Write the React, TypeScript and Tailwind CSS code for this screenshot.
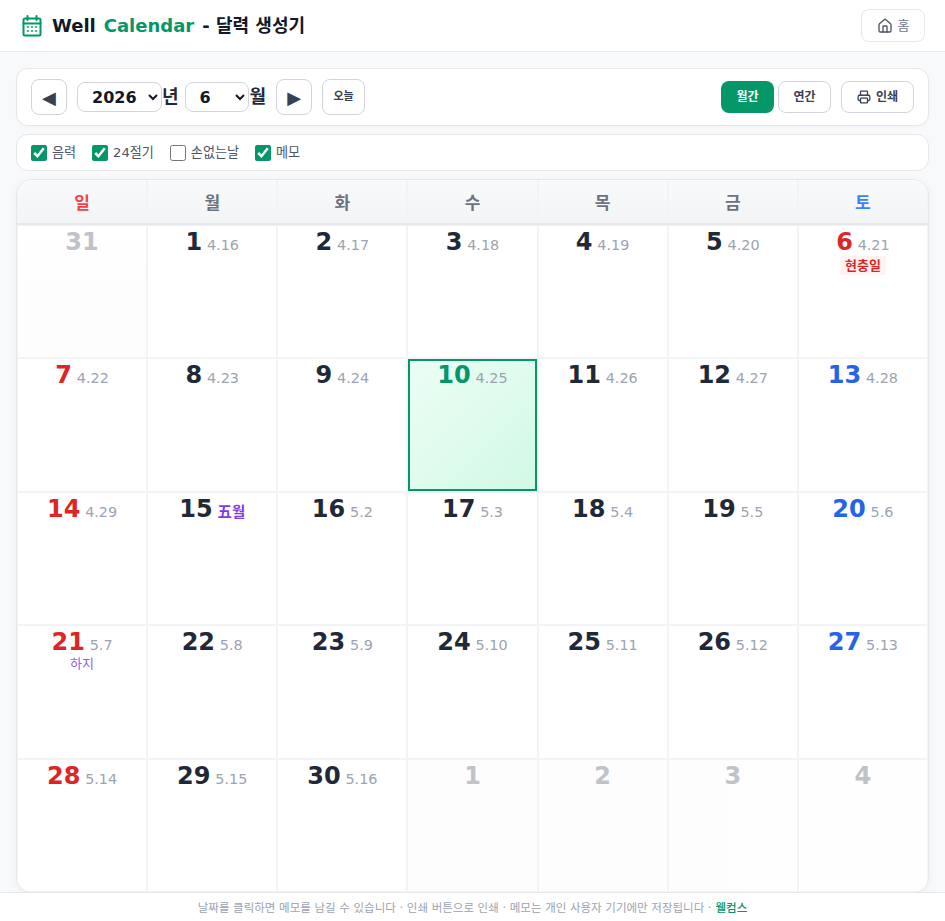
import React from "react";

type Cell = { d: number; l?: string; other?: string; c?: "red" | "blue"; today?: boolean; term?: string; holi?: string; month?: string };

const weeks: Cell[][] = [
  [{ d: 31, other: "bg-gradient-to-b from-white to-[#fdfdfd] to-[55%]" }, { d: 1, l: "4.16" }, { d: 2, l: "4.17" }, { d: 3, l: "4.18" }, { d: 4, l: "4.19" }, { d: 5, l: "4.20" }, { d: 6, l: "4.21", c: "red", holi: "현충일" }],
  [{ d: 7, l: "4.22", c: "red" }, { d: 8, l: "4.23" }, { d: 9, l: "4.24" }, { d: 10, l: "4.25", today: true }, { d: 11, l: "4.26" }, { d: 12, l: "4.27" }, { d: 13, l: "4.28", c: "blue" }],
  [{ d: 14, l: "4.29", c: "red" }, { d: 15, month: "五월" }, { d: 16, l: "5.2" }, { d: 17, l: "5.3" }, { d: 18, l: "5.4" }, { d: 19, l: "5.5" }, { d: 20, l: "5.6", c: "blue" }],
  [{ d: 21, l: "5.7", c: "red", term: "하지" }, { d: 22, l: "5.8" }, { d: 23, l: "5.9" }, { d: 24, l: "5.10" }, { d: 25, l: "5.11" }, { d: 26, l: "5.12" }, { d: 27, l: "5.13", c: "blue" }],
  [{ d: 28, l: "5.14", c: "red" }, { d: 29, l: "5.15" }, { d: 30, l: "5.16" }, { d: 1, other: "bg-[#fdfdfd]" }, { d: 2, other: "bg-[#fdfdfd]" }, { d: 3, other: "bg-gradient-to-r from-[#fdfdfd] to-[#fefefe]" }, { d: 4, other: "bg-[#fefefe]" }],
];

const days = ["일", "월", "화", "수", "목", "금", "토"];

function Check({ on, label }: { on: boolean; label: string }) {
  return (
    <label className="flex items-center gap-[5px] text-[13.1px] leading-[16px] text-[#4b5563]">
      <input type="checkbox" defaultChecked={on} className="m-0 h-4 w-4 accent-[#059669]" />
      <span className="pt-px">{label}</span>
    </label>
  );
}

function DayCell({ cell }: { cell: Cell }) {
  const numColor = cell.other
    ? "text-[#bfc3c9]"
    : cell.today
      ? "text-[#059669]"
      : cell.c === "red"
        ? "text-[#dc2626]"
        : cell.c === "blue"
          ? "text-[#2563eb]"
          : "text-[#1f2937]";
  const look = cell.today
    ? "border-2 border-[#059669] bg-gradient-to-br from-[#ecfdf5] to-[#d1fae5]"
    : `pt-px ${cell.other ?? "bg-white"}`;
  return (
    <div className="min-w-0 border border-[#f3f4f6]">
      <div className={`flex h-full flex-col items-center ${look}`}>
        <div className={`flex items-baseline justify-center gap-[4.8px] ${cell.today ? "-mt-px" : ""}`}>
          <span className={`text-[24px] leading-[30px] font-bold ${numColor}`}>{cell.d}</span>
          {cell.l && <span className="text-[14.4px] leading-[18px] text-[#9ca3af]">{cell.l}</span>}
          {cell.month && <span className="text-[14.4px] leading-[18px] font-bold text-[#7c3aed]">{cell.month}</span>}
        </div>
        {cell.holi && <div className="-mt-px rounded-[3px] bg-[#fef2f2] px-[5px] text-[13px] leading-[19px] font-bold text-[#dc2626]">{cell.holi}</div>}
        {cell.term && <div className="-mt-px text-[13px] leading-[16px] text-[#8b5cf6]">{cell.term}</div>}
      </div>
    </div>
  );
}

export default function App() {
  return (
    <div className="flex h-[921px] flex-col overflow-hidden bg-[#f8f9fb] font-['DejaVu_Sans','Noto_Sans_CJK_KR',sans-serif]">
      <header className="flex h-[52px] shrink-0 items-center justify-between border-b border-[#e5e7eb] bg-white pr-5 pl-[22px]">
        <div className="flex items-center">
          <svg width="20" height="22" viewBox="0 0 20 22" fill="none" stroke="#059669" strokeWidth="2" strokeLinecap="round">
            <rect x="1.5" y="3.5" width="17" height="17" rx="1.5" />
            <path d="M5.5 1v4M14.5 1v4M1.5 8.5h17" />
            <path d="M5.5 12h1M9.5 12h1M13.5 12h1M5.5 16h1M9.5 16h1M13.5 16h1" strokeWidth="1.6" />
          </svg>
          <h1 className="ml-[10px] flex items-center text-[18px] leading-[28px] font-bold text-[#111827]">
            <span>Well</span>
            <span className="ml-2 text-[#059669]">Calendar</span>
            <span className="ml-2">- 달력 생성기</span>
          </h1>
        </div>
        <button className="flex h-[33px] w-[64px] items-center justify-center gap-[5px] rounded-lg border border-[#e5e7eb] bg-white text-[13px] text-[#6b7280]">
          <svg width="16" height="16" viewBox="0 0 24 24" fill="none" stroke="#4b5563" strokeWidth="2" strokeLinecap="round" strokeLinejoin="round">
            <path d="M15 21v-8a1 1 0 0 0-1-1h-4a1 1 0 0 0-1 1v8" />
            <path d="M3 10a2 2 0 0 1 .7-1.5l7-6a2 2 0 0 1 2.6 0l7 6A2 2 0 0 1 21 10v9a2 2 0 0 1-2 2H5a2 2 0 0 1-2-2z" />
          </svg>
          홈
        </button>
      </header>

      <main className="flex min-h-0 flex-1 flex-col gap-2 px-4 pt-4">
        <div className="flex h-[58px] shrink-0 items-center justify-between rounded-xl border border-[#e5e7eb] bg-white px-[14px] shadow-[0_1px_2px_rgba(0,0,0,0.03)]">
          <div className="flex items-center">
            <button className="flex h-9 w-9 items-center justify-center rounded-lg border border-[#d1d5db] bg-white text-[18px] text-[#374151]">◀</button>
            <select defaultValue="2026" className="ml-[10px] h-[30px] w-[85px] rounded-lg border border-[#d1d5db] bg-white pl-[10px] text-[16px] font-bold text-[#111827]">
              <option>2026</option>
            </select>
            <span className="text-[18px] leading-[24px] font-bold text-[#1f2937]">년</span>
            <select defaultValue="6" className="ml-[6px] h-[30px] w-[64px] rounded-lg border border-[#d1d5db] bg-white pl-[10px] text-[16px] font-bold text-[#111827]">
              <option>6</option>
            </select>
            <span className="ml-[1px] text-[18px] leading-[24px] font-bold text-[#1f2937]">월</span>
            <button className="ml-[10px] flex h-9 w-9 items-center justify-center rounded-lg border border-[#d1d5db] bg-white text-[18px] text-[#374151]">▶</button>
            <button className="ml-[10px] h-9 w-[43px] rounded-lg border border-[#d1d5db] bg-white text-[11px] font-bold text-[#374151]">오늘</button>
          </div>
          <div className="flex items-center">
            <button className="h-8 w-[53px] rounded-lg bg-[#059669] text-[12px] font-bold text-white">월간</button>
            <button className="ml-[4px] h-8 w-[53px] rounded-lg border border-[#d1d5db] bg-white text-[12px] font-bold text-[#374151]">연간</button>
            <button className="ml-[10px] flex h-8 w-[73px] items-center justify-center gap-[5px] rounded-lg border border-[#d1d5db] bg-white text-[12px] font-bold text-[#374151]">
              <svg width="14" height="14" viewBox="0 0 24 24" fill="none" stroke="#374151" strokeWidth="2.2" strokeLinecap="round" strokeLinejoin="round">
                <path d="M6 18H4a2 2 0 0 1-2-2v-5a2 2 0 0 1 2-2h16a2 2 0 0 1 2 2v5a2 2 0 0 1-2 2h-2" />
                <path d="M6 9V3a1 1 0 0 1 1-1h10a1 1 0 0 1 1 1v6" />
                <rect x="6" y="14" width="12" height="8" rx="1" />
              </svg>
              인쇄
            </button>
          </div>
        </div>

        <div className="flex h-[37px] shrink-0 items-center gap-4 rounded-xl border border-[#e5e7eb] bg-white px-[14px]">
          <Check on label="음력" />
          <Check on label="24절기" />
          <Check on={false} label="손없는날" />
          <Check on label="메모" />
        </div>

        <div className="-mb-px flex min-h-0 flex-1 flex-col overflow-hidden rounded-2xl border border-[#e5e7eb] bg-white shadow-[0_2px_8px_rgba(0,0,0,0.05)]">
          <div className="grid h-[45px] shrink-0 grid-cols-7 border-b-2 border-[#e5e7eb] bg-gradient-to-b from-[#f9fafb] to-[#f3f4f6]">
            {days.map((d, i) => (
              <div
                key={d}
                className={`flex items-center justify-center border-x border-[#f3f4f6] pt-1 text-[17px] font-bold ${i === 0 ? "text-[#ef4444]" : i === 6 ? "text-[#3b82f6]" : "text-[#6b7280]"}`}
              >
                {d}
              </div>
            ))}
          </div>
          <div className="grid min-h-0 flex-1 grid-cols-7 grid-rows-5">
            {weeks.map((w, r) => w.map((c, i) => <DayCell key={`${r}-${i}`} cell={c} />))}
          </div>
        </div>
      </main>

      <footer className="flex h-[29px] shrink-0 items-center justify-center border-t border-[#e5e7eb] bg-white pt-1 text-[11.5px] text-[#9ca3af]">
        <span>날짜를 클릭하면 메모를 남길 수 있습니다 · 인쇄 버튼으로 인쇄 · 메모는 개인 사용자 기기에만 저장됩니다 · </span>
        <span className="ml-1 font-medium text-[#059669]">웰컴스</span>
      </footer>
    </div>
  );
}
